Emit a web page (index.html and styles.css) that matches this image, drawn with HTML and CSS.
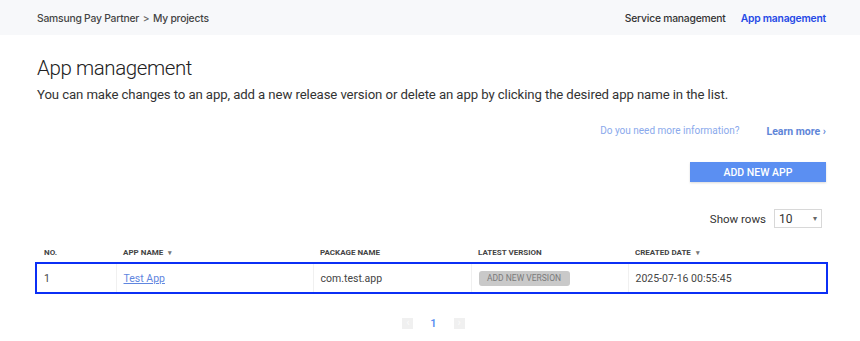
FILE: index.html
```html
<!DOCTYPE html>
<html lang="en">
<head>
    <meta charset="UTF-8">
    <title>App management</title>
    <link rel="stylesheet" href="styles.css">
</head>
<body>
    <div class="topbar">
        <div class="crumbs">Samsung Pay Partner <span class="sep">&gt;</span> My projects</div>
        <div class="topnav">
            <a class="navlink">Service management</a>
            <a class="navlink active">App management</a>
        </div>
    </div>

    <div class="page">
        <h1>App management</h1>
        <p class="desc">You can make changes to an app, add a new release version or delete an app by clicking the desired app name in the list.</p>

        <div class="info">
            <span class="info-q">Do you need more information?</span>
            <a class="learn">Learn more &rsaquo;</a>
        </div>

        <div class="actions">
            <button class="add-btn">ADD NEW APP</button>
        </div>

        <div class="rows">
            <span>Show rows</span>
            <div class="select">10 <span class="caret">&#9662;</span></div>
        </div>

        <table class="apps">
            <thead>
                <tr>
                    <th class="c-no">NO.</th>
                    <th class="c-name">APP NAME <span class="sort">&#9662;</span></th>
                    <th class="c-pkg">PACKAGE NAME</th>
                    <th class="c-ver">LATEST VERSION</th>
                    <th class="c-date">CREATED DATE <span class="sort">&#9662;</span></th>
                </tr>
            </thead>
            <tbody>
                <tr class="selected">
                    <td>1</td>
                    <td><a class="app-link">Test App</a></td>
                    <td>com.test.app</td>
                    <td><button class="ver-btn">ADD NEW VERSION</button></td>
                    <td>2025-07-16 00:55:45</td>
                </tr>
            </tbody>
        </table>

        <div class="pager">
            <span class="pg-arrow">&lsaquo;</span>
            <span class="pg-num">1</span>
            <span class="pg-arrow">&rsaquo;</span>
        </div>
    </div>
</body>
</html>
```

FILE: styles.css
```css
body {
    margin: 0;
    font-family: Roboto, "Noto Sans", sans-serif;
    color: #333;
    background-color: white;
}
.topbar {
    height: 35px;
    background-color: #f7f8fa;
    display: flex;
    align-items: center;
    justify-content: space-between;
    padding: 0 34px 0 37px;
    font-family: Inter, sans-serif;
    font-size: 10.3px;
    font-weight: 500;
    letter-spacing: -0.2px;
}
.crumbs {
    color: #444;
}
.sep {
    margin: 0 1px;
    color: #666;
}
.topnav {
    display: flex;
    gap: 15px;
}
.navlink {
    color: #333;
}
.navlink.active {
    color: #2549e6;
    font-weight: 600;
}
.page {
    padding: 0 34px 0 37px;
}
h1 {
    margin: 19px 0 0;
    font-size: 20.5px;
    font-weight: 300;
    letter-spacing: -0.4px;
    color: #222;
    line-height: 28px;
}
.desc {
    margin: 3px 0 0;
    font-size: 13.2px;
    letter-spacing: -0.1px;
    line-height: 20px;
    color: #333;
}
.info {
    display: flex;
    justify-content: flex-end;
    gap: 27px;
    margin-top: 20px;
    font-size: 10.5px;
}
.info-q {
    color: #8aa9ec;
    font-size: 10px;
}
.learn {
    color: #5f86d8;
    font-weight: 700;
}
.actions {
    display: flex;
    justify-content: flex-end;
    margin-top: 24px;
}
.add-btn {
    width: 136px;
    height: 20px;
    border: none;
    background-color: #5b8ff2;
    color: white;
    font-family: Roboto, sans-serif;
    font-size: 10.5px;
    font-weight: 500;
    box-shadow: 0 1px 2px rgba(0,0,0,0.15);
}
.rows {
    display: flex;
    justify-content: flex-end;
    align-items: center;
    gap: 8px;
    margin-top: 27px;
    margin-right: 4px;
    font-size: 11.5px;
    color: #333;
}
.select {
    width: 38px;
    height: 17px;
    border: 1px solid #d8d8d8;
    padding: 0 4px;
    display: flex;
    align-items: center;
    justify-content: space-between;
    font-size: 12px;
}
.caret {
    font-size: 8px;
    color: #666;
}
.apps {
    width: 100%;
    border-collapse: collapse;
    margin-top: 18px;
    font-size: 10.5px;
}
.apps th {
    text-align: left;
    font-size: 8px;
    font-weight: 700;
    color: #444;
    padding: 0 7px 6px;
    height: 12px;
}
.sort {
    margin-left: 3px;
    font-size: 7px;
    color: #777;
}
.c-no { width: 65px; }
.c-name { width: 183px; }
.c-pkg { width: 144px; }
.c-ver { width: 143px; }
.apps td {
    padding: 0 7px;
    height: 28px;
    color: #444;
    border-left: 1px solid #f0f0f0;
}
.apps td:first-child {
    border-left: none;
}
.apps tr.selected {
    outline: 2px solid #0b2ff5;
}
.app-link {
    color: #5f86e0;
    text-decoration: underline;
}
.ver-btn {
    width: 91px;
    height: 15px;
    padding: 0;
    border: none;
    border-radius: 3px;
    background-color: #c9c9c9;
    color: #7a7a7a;
    font-family: Roboto, sans-serif;
    font-size: 8.5px;
}
.pager {
    display: flex;
    justify-content: center;
    align-items: center;
    gap: 17px;
    margin-top: 25px;
    margin-left: 4px;
}
.pg-arrow {
    width: 11px;
    height: 11px;
    background-color: #f0f0f0;
    color: #fafafa;
    font-size: 11px;
    font-weight: 700;
    line-height: 10px;
    text-align: center;
}
.pg-num {
    color: #5b8ff2;
    font-size: 11px;
    font-weight: 600;
}
```
